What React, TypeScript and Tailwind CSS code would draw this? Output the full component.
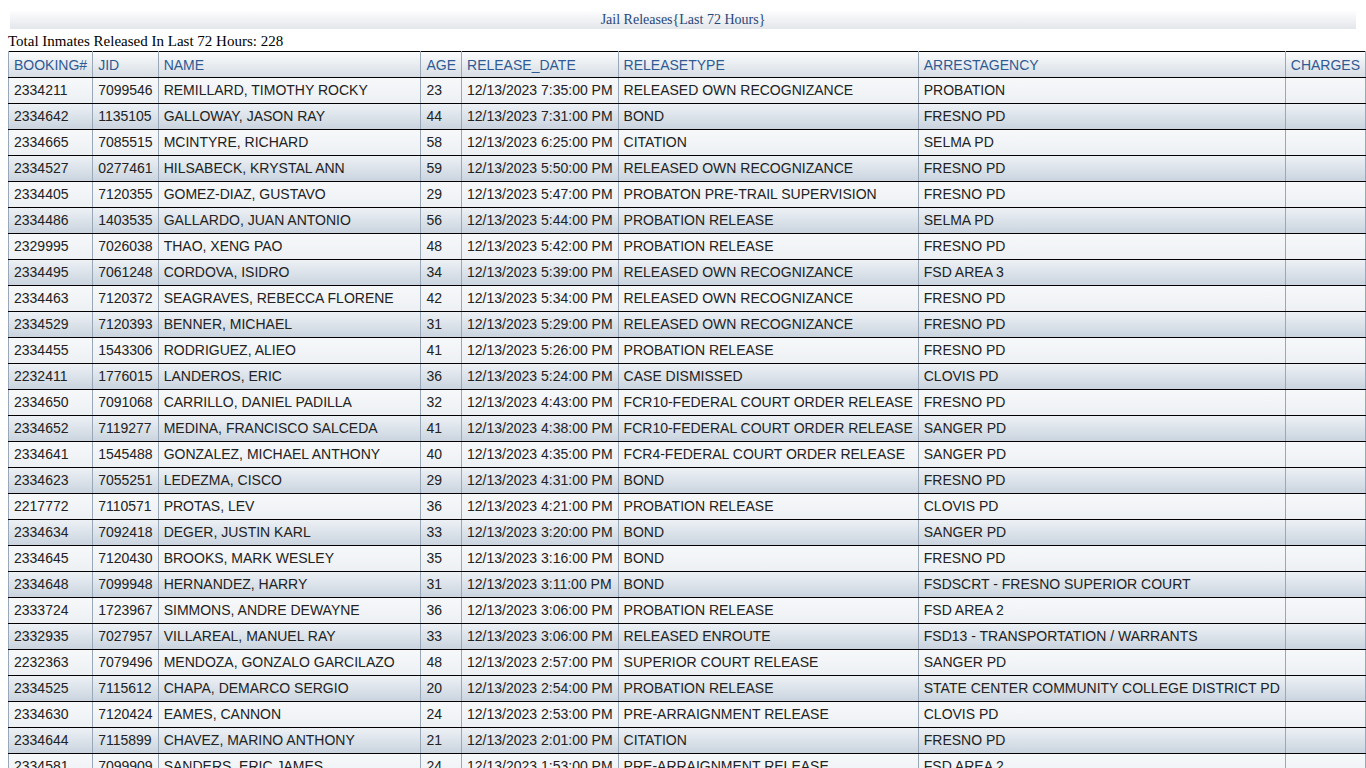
const rows: string[][] = [
  ['2334211', '7099546', 'REMILLARD, TIMOTHY ROCKY', '23', '12/13/2023 7:35:00 PM', 'RELEASED OWN RECOGNIZANCE', 'PROBATION'],
  ['2334642', '1135105', 'GALLOWAY, JASON RAY', '44', '12/13/2023 7:31:00 PM', 'BOND', 'FRESNO PD'],
  ['2334665', '7085515', 'MCINTYRE, RICHARD', '58', '12/13/2023 6:25:00 PM', 'CITATION', 'SELMA PD'],
  ['2334527', '0277461', 'HILSABECK, KRYSTAL ANN', '59', '12/13/2023 5:50:00 PM', 'RELEASED OWN RECOGNIZANCE', 'FRESNO PD'],
  ['2334405', '7120355', 'GOMEZ-DIAZ, GUSTAVO', '29', '12/13/2023 5:47:00 PM', 'PROBATON PRE-TRAIL SUPERVISION', 'FRESNO PD'],
  ['2334486', '1403535', 'GALLARDO, JUAN ANTONIO', '56', '12/13/2023 5:44:00 PM', 'PROBATION RELEASE', 'SELMA PD'],
  ['2329995', '7026038', 'THAO, XENG PAO', '48', '12/13/2023 5:42:00 PM', 'PROBATION RELEASE', 'FRESNO PD'],
  ['2334495', '7061248', 'CORDOVA, ISIDRO', '34', '12/13/2023 5:39:00 PM', 'RELEASED OWN RECOGNIZANCE', 'FSD AREA 3'],
  ['2334463', '7120372', 'SEAGRAVES, REBECCA FLORENE', '42', '12/13/2023 5:34:00 PM', 'RELEASED OWN RECOGNIZANCE', 'FRESNO PD'],
  ['2334529', '7120393', 'BENNER, MICHAEL', '31', '12/13/2023 5:29:00 PM', 'RELEASED OWN RECOGNIZANCE', 'FRESNO PD'],
  ['2334455', '1543306', 'RODRIGUEZ, ALIEO', '41', '12/13/2023 5:26:00 PM', 'PROBATION RELEASE', 'FRESNO PD'],
  ['2232411', '1776015', 'LANDEROS, ERIC', '36', '12/13/2023 5:24:00 PM', 'CASE DISMISSED', 'CLOVIS PD'],
  ['2334650', '7091068', 'CARRILLO, DANIEL PADILLA', '32', '12/13/2023 4:43:00 PM', 'FCR10-FEDERAL COURT ORDER RELEASE', 'FRESNO PD'],
  ['2334652', '7119277', 'MEDINA, FRANCISCO SALCEDA', '41', '12/13/2023 4:38:00 PM', 'FCR10-FEDERAL COURT ORDER RELEASE', 'SANGER PD'],
  ['2334641', '1545488', 'GONZALEZ, MICHAEL ANTHONY', '40', '12/13/2023 4:35:00 PM', 'FCR4-FEDERAL COURT ORDER RELEASE', 'SANGER PD'],
  ['2334623', '7055251', 'LEDEZMA, CISCO', '29', '12/13/2023 4:31:00 PM', 'BOND', 'FRESNO PD'],
  ['2217772', '7110571', 'PROTAS, LEV', '36', '12/13/2023 4:21:00 PM', 'PROBATION RELEASE', 'CLOVIS PD'],
  ['2334634', '7092418', 'DEGER, JUSTIN KARL', '33', '12/13/2023 3:20:00 PM', 'BOND', 'SANGER PD'],
  ['2334645', '7120430', 'BROOKS, MARK WESLEY', '35', '12/13/2023 3:16:00 PM', 'BOND', 'FRESNO PD'],
  ['2334648', '7099948', 'HERNANDEZ, HARRY', '31', '12/13/2023 3:11:00 PM', 'BOND', 'FSDSCRT - FRESNO SUPERIOR COURT'],
  ['2333724', '1723967', 'SIMMONS, ANDRE DEWAYNE', '36', '12/13/2023 3:06:00 PM', 'PROBATION RELEASE', 'FSD AREA 2'],
  ['2332935', '7027957', 'VILLAREAL, MANUEL RAY', '33', '12/13/2023 3:06:00 PM', 'RELEASED ENROUTE', 'FSD13 - TRANSPORTATION / WARRANTS'],
  ['2232363', '7079496', 'MENDOZA, GONZALO GARCILAZO', '48', '12/13/2023 2:57:00 PM', 'SUPERIOR COURT RELEASE', 'SANGER PD'],
  ['2334525', '7115612', 'CHAPA, DEMARCO SERGIO', '20', '12/13/2023 2:54:00 PM', 'PROBATION RELEASE', 'STATE CENTER COMMUNITY COLLEGE DISTRICT PD'],
  ['2334630', '7120424', 'EAMES, CANNON', '24', '12/13/2023 2:53:00 PM', 'PRE-ARRAIGNMENT RELEASE', 'CLOVIS PD'],
  ['2334644', '7115899', 'CHAVEZ, MARINO ANTHONY', '21', '12/13/2023 2:01:00 PM', 'CITATION', 'FRESNO PD'],
  ['2334581', '7099909', 'SANDERS, ERIC JAMES', '24', '12/13/2023 1:53:00 PM', 'PRE-ARRAIGNMENT RELEASE', 'FSD AREA 2'],
];

const headers = ['BOOKING#', 'JID', 'NAME', 'AGE', 'RELEASE_DATE', 'RELEASETYPE', 'ARRESTAGENCY', 'CHARGES'];
const widths = ['w-[79px]', 'w-[62px]', 'w-[277px]', 'w-[39px]', 'w-[153px]', 'w-[279px]', 'w-[342px]', 'w-[76px]'];

export default function App() {
  return (
    <div className="min-h-screen bg-white pt-[11px] font-[family-name:Liberation_Sans,Arial,sans-serif] text-[14px] text-[#222]">
      <div className="mx-[10px] h-[18px] bg-gradient-to-b from-[#fdfdfe] to-[#e3e6ea] text-center font-[family-name:Liberation_Serif,serif] text-[14px] leading-[18px] text-[#27477a]">
        Jail Releases{'{'}Last 72 Hours{'}'}
      </div>
      <div className="ml-[8px] mt-[2px] font-[family-name:Liberation_Serif,serif] text-[15px] leading-[20px] text-black">
        Total Inmates Released In Last 72 Hours: 228
      </div>
      <table className="ml-[8px] table-fixed border-collapse border border-black">
        <colgroup>
          {widths.map((w, i) => (
            <col key={i} className={w} />
          ))}
        </colgroup>
        <thead>
          <tr className="h-[26px] bg-gradient-to-b from-[#fbfcfd] to-[#d5dce3]">
            {headers.map((h) => (
              <th key={h} className="border-b border-b-black border-x border-x-[#98a8b8] px-[5px] text-left font-normal leading-[16px] text-[#2f5a94]">
                {h}
              </th>
            ))}
          </tr>
        </thead>
        <tbody>
          {rows.map((r, i) => (
            <tr
              key={r[0]}
              className={
                i % 2 === 0
                  ? 'h-[26px] bg-gradient-to-b from-[#f6f8fa] to-[#edf0f3]'
                  : 'h-[26px] bg-gradient-to-b from-[#edf1f5] to-[#c9d3de]'
              }
            >
              {[...r, ''].map((c, j) => (
                <td key={j} className="whitespace-nowrap border-b border-b-black border-x border-x-[#98a8b8] px-[5px] pb-[1px] leading-[16px]">
                  {c}
                </td>
              ))}
            </tr>
          ))}
        </tbody>
      </table>
    </div>
  );
}
